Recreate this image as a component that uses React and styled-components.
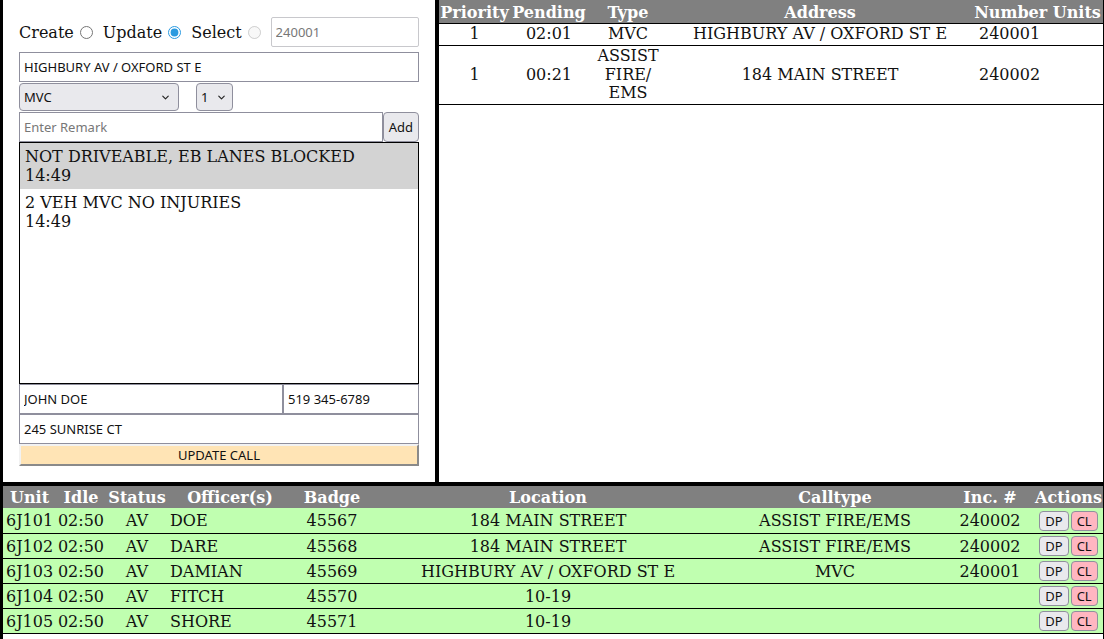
import React from "react";
import styled, { createGlobalStyle } from "styled-components";
import { ChevronDown } from "lucide-react";

const GlobalStyle = createGlobalStyle`
  html, body { margin: 0; padding: 0; background: #000; }
  * { box-sizing: border-box; }
`;

const SERIF = `"DejaVu Serif", serif`;
const SANS = `"Noto Sans", "Open Sans", sans-serif`;

const Page = styled.div`
  height: 639px;
  width: 1104px;
  background: #000;
  display: flex;
  flex-direction: column;
  gap: 4px;
  padding: 0 1px 0 3px;
  overflow: hidden;
`;

const TopArea = styled.div`
  display: flex;
  gap: 4px;
  height: 482px;
  flex: none;
`;

const FormPanel = styled.div`
  width: 432px;
  flex: none;
  background: #fff;
  padding: 17px 16px 0 16px;
  display: flex;
  flex-direction: column;
`;

const CallsPanel = styled.div`
  flex: 1;
  background: #fff;
`;

const BottomArea = styled.div`
  flex: 1;
  background: #fff;
`;

const ModeRow = styled.div`
  display: flex;
  align-items: center;
  height: 30px;
  font-family: ${SERIF};
  font-size: 16px;
  color: #111;
  margin-bottom: 5px;
`;

const ModeLabel = styled.label`
  display: flex;
  align-items: center;
  margin-right: 10px;
  input {
    margin: 0 0 0 6px;
    width: 13px;
    height: 13px;
    accent-color: #2a9ae0;
  }
`;

const TextInput = styled.input`
  height: ${(p) => p.$h || 30}px;
  width: ${(p) => p.$w || "100%"};
  flex: ${(p) => (p.$grow ? 1 : "none")};
  min-width: 0;
  border: 1px solid ${(p) => (p.$light ? "#c8c8cc" : "#8f8f9d")};
  border-radius: ${(p) => (p.$light ? "2px" : "0")};
  padding: 0 4px;
  font-family: ${SANS};
  font-size: 13px;
  color: #111;
  background: #fff;
  outline: none;
  &::placeholder { color: #777; }
  &:read-only { color: #777; }
`;

const Row = styled.div`
  display: flex;
  align-items: center;
  gap: ${(p) => p.$gap || 0}px;
  margin-bottom: ${(p) => p.$mb || 0}px;
`;

const SelectWrap = styled.div`
  position: relative;
  width: ${(p) => p.$w}px;
  height: 28px;
  svg {
    position: absolute;
    right: ${(p) => p.$chev || 8}px;
    top: 9px;
    pointer-events: none;
    color: #222;
  }
`;

const Select = styled.select`
  appearance: none;
  width: 100%;
  height: 100%;
  background: #e9e9ed;
  border: 1px solid #8f8f9d;
  border-radius: 4px;
  padding: 0 4px;
  font-family: ${SANS};
  font-size: 13px;
  color: #111;
`;

const SmallButton = styled.button`
  height: ${(p) => p.$h || 30}px;
  background: ${(p) => p.$bg || "#e9e9ed"};
  border: 1px solid #8f8f9d;
  border-radius: 4px;
  padding: 0 ${(p) => p.$px ?? 4}px;
  font-family: ${SANS};
  font-size: ${(p) => p.$fs || 13}px;
  color: #111;
  cursor: pointer;
`;

const RemarkList = styled.div`
  height: 242px;
  border: 1px solid #000;
  background: #fff;
  overflow: hidden;
`;

const RemarkItem = styled.div`
  background: ${(p) => (p.$active ? "#d3d3d3" : "#fff")};
  padding: 4px 5px 4px 5px;
  font-family: ${SERIF};
  font-size: 16px;
  line-height: 19px;
  color: #111;
`;

const SubmitButton = styled.button`
  height: 22px;
  width: 100%;
  background: #ffe4b5;
  border: 2px solid;
  border-top-color: #f2f2f2;
  border-left-color: #f2f2f2;
  border-right-color: #8a8a8a;
  border-bottom-color: #8a8a8a;
  font-family: ${SANS};
  font-size: 13px;
  color: #111;
  padding: 0;
`;

const Table = styled.table`
  width: 100%;
  border-collapse: collapse;
  table-layout: fixed;
  font-family: ${SERIF};
  font-size: 16px;
  color: #111;
`;

const Th = styled.th`
  background: #808080;
  color: #fff;
  font-weight: bold;
  height: ${(p) => (p.$line ? 23 : 22)}px;
  padding: ${(p) => (p.$line ? "2px 0 0 0" : "0")};
  line-height: 19px;
  white-space: nowrap;
  border-bottom: ${(p) => (p.$line ? "1px solid #000" : "none")};
`;

const CallTd = styled.td`
  text-align: ${(p) => p.$align || "center"};
  padding: 1.5px 0 1px ${(p) => p.$pl || 0}px;
  line-height: 18.5px;
  border-bottom: 1px solid #000;
  vertical-align: middle;
`;

const UnitRow = styled.tr`
  background: #c0ffb0;
`;

const UnitTd = styled.td`
  text-align: ${(p) => p.$align || "center"};
  padding: 1px 0 0 ${(p) => p.$pl || 0}px;
  height: 25px;
  line-height: 19px;
  border-bottom: 1px solid #000;
  white-space: nowrap;
`;

const Actions = styled.div`
  display: flex;
  justify-content: center;
  gap: 2px;
`;

const calls = [
  { pr: "1", pend: "02:01", type: "MVC", addr: "HIGHBURY AV / OXFORD ST E", num: "240001" },
  { pr: "1", pend: "00:21", type: <>ASSIST FIRE/<wbr />EMS</>, addr: "184 MAIN STREET", num: "240002" },
];

const units = [
  { u: "6J101", off: "DOE", badge: "45567", loc: "184 MAIN STREET", ct: "ASSIST FIRE/EMS", inc: "240002" },
  { u: "6J102", off: "DARE", badge: "45568", loc: "184 MAIN STREET", ct: "ASSIST FIRE/EMS", inc: "240002" },
  { u: "6J103", off: "DAMIAN", badge: "45569", loc: "HIGHBURY AV / OXFORD ST E", ct: "MVC", inc: "240001" },
  { u: "6J104", off: "FITCH", badge: "45570", loc: "10-19", ct: "", inc: "" },
  { u: "6J105", off: "SHORE", badge: "45571", loc: "10-19", ct: "", inc: "" },
];

export default function App() {
  return (
    <>
      <GlobalStyle />
      <Page>
        <TopArea>
          <FormPanel>
            <ModeRow>
              <ModeLabel>Create<input type="radio" name="mode" /></ModeLabel>
              <ModeLabel>Update<input type="radio" name="mode" defaultChecked /></ModeLabel>
              <ModeLabel>Select<input type="radio" name="mode" disabled /></ModeLabel>
              <TextInput $light $grow readOnly defaultValue="240001" />
            </ModeRow>
            <Row $mb={1}>
              <TextInput defaultValue="HIGHBURY AV / OXFORD ST E" />
            </Row>
            <Row $gap={17} $mb={1}>
              <SelectWrap $w={160} $chev={8}>
                <Select defaultValue="MVC"><option>MVC</option></Select>
                <ChevronDown size={11} strokeWidth={2.5} />
              </SelectWrap>
              <SelectWrap $w={37} $chev={6}>
                <Select defaultValue="1"><option>1</option></Select>
                <ChevronDown size={11} strokeWidth={2.5} />
              </SelectWrap>
            </Row>
            <Row>
              <TextInput $grow placeholder="Enter Remark" />
              <SmallButton $px={5}>Add</SmallButton>
            </Row>
            <RemarkList>
              <RemarkItem $active>NOT DRIVEABLE, EB LANES BLOCKED<br />14:49</RemarkItem>
              <RemarkItem>2 VEH MVC NO INJURIES<br />14:49</RemarkItem>
            </RemarkList>
            <Row>
              <TextInput $w="264px" defaultValue="JOHN DOE" />
              <TextInput $grow defaultValue="519 345-6789" />
            </Row>
            <Row>
              <TextInput defaultValue="245 SUNRISE CT" />
            </Row>
            <SubmitButton>UPDATE CALL</SubmitButton>
          </FormPanel>
          <CallsPanel>
            <Table>
              <colgroup>
                <col style={{ width: 71 }} />
                <col style={{ width: 78 }} />
                <col style={{ width: 80 }} />
                <col style={{ width: 304 }} />
                <col />
              </colgroup>
              <thead>
                <tr>
                  <Th $line>Priority</Th>
                  <Th $line>Pending</Th>
                  <Th $line>Type</Th>
                  <Th $line>Address</Th>
                  <Th $line>Number Units</Th>
                </tr>
              </thead>
              <tbody>
                {calls.map((c, i) => (
                  <tr key={i}>
                    <CallTd>{c.pr}</CallTd>
                    <CallTd>{c.pend}</CallTd>
                    <CallTd>{c.type}</CallTd>
                    <CallTd>{c.addr}</CallTd>
                    <CallTd $align="left" $pl={7}>{c.num}</CallTd>
                  </tr>
                ))}
              </tbody>
            </Table>
          </CallsPanel>
        </TopArea>
        <BottomArea>
          <Table>
            <colgroup>
              <col style={{ width: 53 }} />
              <col style={{ width: 50 }} />
              <col style={{ width: 62 }} />
              <col style={{ width: 124 }} />
              <col style={{ width: 80 }} />
              <col style={{ width: 352 }} />
              <col style={{ width: 222 }} />
              <col style={{ width: 88 }} />
              <col />
            </colgroup>
            <thead>
              <tr>
                <Th>Unit</Th>
                <Th>Idle</Th>
                <Th>Status</Th>
                <Th>Officer(s)</Th>
                <Th>Badge</Th>
                <Th>Location</Th>
                <Th>Calltype</Th>
                <Th>Inc. #</Th>
                <Th>Actions</Th>
              </tr>
            </thead>
            <tbody>
              {units.map((u) => (
                <UnitRow key={u.u}>
                  <UnitTd $align="left" $pl={3}>{u.u}</UnitTd>
                  <UnitTd>02:50</UnitTd>
                  <UnitTd>AV</UnitTd>
                  <UnitTd $align="left" $pl={2}>{u.off}</UnitTd>
                  <UnitTd>{u.badge}</UnitTd>
                  <UnitTd>{u.loc}</UnitTd>
                  <UnitTd>{u.ct}</UnitTd>
                  <UnitTd>{u.inc}</UnitTd>
                  <UnitTd>
                    <Actions>
                      <SmallButton $h={20} $px={5} $fs={13}>DP</SmallButton>
                      <SmallButton $h={20} $px={5} $fs={13} $bg="#ffb6c1">CL</SmallButton>
                    </Actions>
                  </UnitTd>
                </UnitRow>
              ))}
            </tbody>
          </Table>
        </BottomArea>
      </Page>
    </>
  );
}
